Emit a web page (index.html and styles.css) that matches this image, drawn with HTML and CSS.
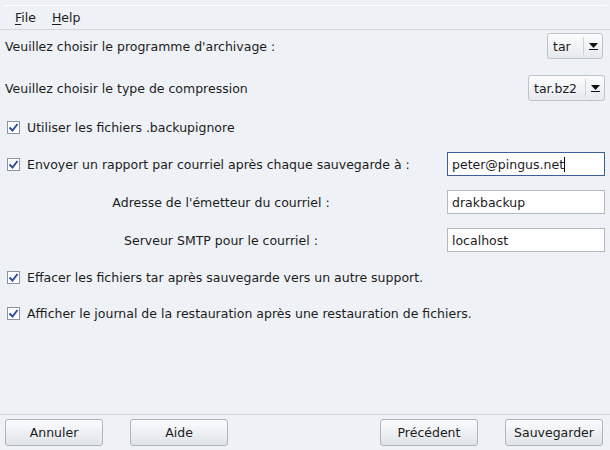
FILE: index.html
```html
<!DOCTYPE html>
<html>
<head>
<meta charset="utf-8">
<link rel="stylesheet" href="styles.css">
</head>
<body>
<div class="app">
  <div class="topline"></div>
  <div class="menubar">
    <span class="menu"><u>F</u>ile</span>
    <span class="menu"><u>H</u>elp</span>
  </div>
  <div class="content">
    <div class="row r1">
      <span class="label">Veuillez choisir le programme d'archivage :</span>
      <div class="combo combo-tar"><span class="combo-text">tar</span><span class="combo-btn"><svg width="9" height="8" viewBox="0 0 9 8"><path d="M0 1h9L4.5 6z" fill="#111"/><rect x="0" y="7" width="9" height="1" fill="#111"/></svg></span></div>
    </div>
    <div class="row r2">
      <span class="label">Veuillez choisir le type de compression</span>
      <div class="combo combo-bz"><span class="combo-text">tar.bz2</span><span class="combo-btn"><svg width="9" height="8" viewBox="0 0 9 8"><path d="M0 1h9L4.5 6z" fill="#111"/><rect x="0" y="7" width="9" height="1" fill="#111"/></svg></span></div>
    </div>
    <div class="row r3">
      <label class="check"><span class="box"><svg width="11" height="11" viewBox="0 0 11 11"><path d="M1.5 5.5l3 3 5-6.5" fill="none" stroke="#2d4f9e" stroke-width="2"/></svg></span>Utiliser les fichiers .backupignore</label>
    </div>
    <div class="row r4">
      <label class="check"><span class="box"><svg width="11" height="11" viewBox="0 0 11 11"><path d="M1.5 5.5l3 3 5-6.5" fill="none" stroke="#2d4f9e" stroke-width="2"/></svg></span>Envoyer un rapport par courriel après chaque sauvegarde à :</label>
      <div class="input focused">peter@pingus.net<span class="caret"></span></div>
    </div>
    <div class="row r5">
      <span class="sublabel">Adresse de l'émetteur du courriel :</span>
      <div class="input">drakbackup</div>
    </div>
    <div class="row r6">
      <span class="sublabel">Serveur SMTP pour le courriel :</span>
      <div class="input">localhost</div>
    </div>
    <div class="row r7">
      <label class="check"><span class="box"><svg width="11" height="11" viewBox="0 0 11 11"><path d="M1.5 5.5l3 3 5-6.5" fill="none" stroke="#2d4f9e" stroke-width="2"/></svg></span>Effacer les fichiers tar après sauvegarde vers un autre support.</label>
    </div>
    <div class="row r8">
      <label class="check"><span class="box"><svg width="11" height="11" viewBox="0 0 11 11"><path d="M1.5 5.5l3 3 5-6.5" fill="none" stroke="#2d4f9e" stroke-width="2"/></svg></span>Afficher le journal de la restauration après une restauration de fichiers.</label>
    </div>
  </div>
  <div class="footer">
    <div class="group">
      <button class="btn">Annuler</button>
      <button class="btn">Aide</button>
    </div>
    <div class="group">
      <button class="btn">Précédent</button>
      <button class="btn">Sauvegarder</button>
    </div>
  </div>
</div>
</body>
</html>
```
FILE: styles.css
```css
html, body {
  margin: 0;
  padding: 0;
}
body {
  background: #eef1f6;
  font-family: "DejaVu Sans", sans-serif;
  font-size: 12.5px;
  color: #1c1c1c;
}
.app {
  width: 610px;
  height: 450px;
  display: flex;
  flex-direction: column;
  box-sizing: border-box;
  padding-top: 5px;
}
.topline {
  height: 1px;
  background: #ffffff;
  margin: 0 3px;
}
.menubar {
  height: 23px;
  display: flex;
  align-items: center;
  gap: 16px;
  padding-left: 15px;
  border-bottom: 1px solid #d3d7dd;
}
.menu u {
  text-decoration: underline;
  text-underline-offset: 2px;
}
.content {
  flex: 1;
  display: flex;
  flex-direction: column;
  padding: 3px 5px 0 5px;
}
.row {
  height: 26px;
  display: flex;
  align-items: center;
  justify-content: space-between;
  margin-top: 12px;
}
.row.r1 { margin-top: 0; }
.row.r2 { margin-top: 16px; }
.row.r3 { margin-top: 13px; }
.row.r4 { margin-top: 11px; }
.row.r7 { margin-top: 11px; }
.row.r8 { margin-top: 10px; }
.label {
  white-space: nowrap;
}
.combo {
  height: 26px;
  box-sizing: border-box;
  border: 1px solid #bcc3cc;
  border-radius: 3px;
  background: linear-gradient(#fdfdfe, #e6e9ee);
  display: flex;
  align-items: center;
}
.combo-tar { width: 56px; margin-right: 2px; }
.combo-bz { width: 77px; margin-right: 0; }
.combo-text {
  flex: 1;
  padding-left: 5px;
}
.combo-btn {
  width: 18px;
  height: 18px;
  border-left: 1px solid #cdd2d8;
  display: flex;
  align-items: center;
  justify-content: center;
}
.check {
  display: flex;
  align-items: center;
  white-space: nowrap;
}
.box {
  width: 11px;
  height: 11px;
  border: 1px solid #8b94a2;
  background: #ffffff;
  margin-left: 2px;
  margin-right: 7px;
  display: flex;
}
.input {
  width: 158px;
  height: 24px;
  box-sizing: border-box;
  border: 1px solid #b3b9c1;
  background: #ffffff;
  padding-left: 4px;
  display: flex;
  align-items: center;
}
.input.focused {
  border-color: #3f5d9e;
}
.caret {
  width: 1px;
  height: 15px;
  background: #000;
}
.sublabel {
  width: 432px;
  text-align: center;
  white-space: nowrap;
}
.footer {
  border-top: 1px solid #d3d7dd;
  height: 36px;
  display: flex;
  justify-content: space-between;
  align-items: flex-start;
  padding: 4px 7px 0 5px;
  box-sizing: border-box;
}
.group {
  display: flex;
  gap: 27px;
}
.btn {
  width: 98px;
  height: 27px;
  border: 1px solid #adb4bd;
  border-radius: 3px;
  background: linear-gradient(#fbfcfd, #dfe3e9);
  font-family: "DejaVu Sans", sans-serif;
  font-size: 12.5px;
  color: #1c1c1c;
  padding: 0;
}
```
